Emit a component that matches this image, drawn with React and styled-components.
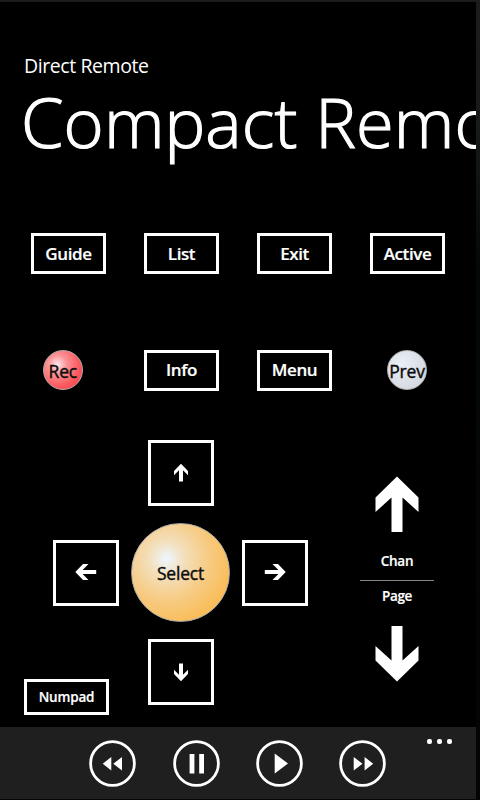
import React from "react";
import styled, { createGlobalStyle } from "styled-components";

const GlobalStyle = createGlobalStyle`
  * { box-sizing: border-box; }
  body { margin: 0; background: #000; }
`;

const Screen = styled.div`
  width: 480px;
  height: 800px;
  padding: 2px 4px 1px 0;
  background: linear-gradient(180deg, #1c1c1c 0, #171a1a 130px, #050808 260px, #030505 760px, #050505 100%);
  font-family: "Open Sans", "Noto Sans", sans-serif;
  color: #fff;
  overflow: hidden;
`;

const Page = styled.main`
  display: flex;
  flex-direction: column;
  height: 797px;
  background: #000;
  overflow: hidden;
`;

const Header = styled.header`
  height: 231px;
  padding: 50px 0 0 24px;
  overflow: hidden;
  white-space: nowrap;
`;

const AppName = styled.div`
  height: 28px;
  font-size: 19.5px;
  line-height: 28px;
  letter-spacing: -0.42px;
`;

const Title = styled.h1`
  margin: 2px 0 0 -3px;
  font-size: 68.5px;
  font-weight: 300;
  line-height: 80px;
  letter-spacing: 0.1px;
  -webkit-text-stroke: 1.2px #fff;
`;

const KeyGrid = styled.section`
  display: grid;
  grid-template-columns: repeat(4, 75px);
  grid-template-rows: 41px 41px;
  column-gap: 38px;
  row-gap: 75.5px;
  margin-left: 31px;
  align-items: center;
  justify-items: center;
`;

const Key = styled.button`
  display: flex;
  align-items: center;
  justify-content: center;
  width: ${(p) => p.$w || 75}px;
  height: ${(p) => p.$h || 41}px;
  padding: 0 0 1px;
  border: 3px solid #fff;
  background: #000;
  color: #fff;
  font: 600 ${(p) => p.$size || 17}px "Open Sans", "Noto Sans", sans-serif;
  letter-spacing: ${(p) => p.$track || -0.4}px;
  -webkit-text-stroke: 0.2px #fff;
`;

const NumpadKey = styled(Key)`
  grid-column: 1;
  grid-row: 3;
  align-self: end;
  justify-self: start;
  margin: 0 0 -10px -29px;
`;

const fills = {
  red: "radial-gradient(circle at 36% 36%, #ffe9ec 0, #fb9296 26%, #fb5a5f 60%, #fa3c42 90%)",
  silver: "radial-gradient(circle at 36% 36%, #eaf0f7 0, #dce2e8 45%, #cfd5da 90%)",
  amber: "radial-gradient(circle at 36% 36%, #edf7ff 0, #f3dfbb 20%, #f7cc86 45%, #f9bf5e 70%, #fab543 90%)",
};

const Orb = styled.button`
  display: flex;
  align-items: center;
  justify-content: center;
  width: ${(p) => p.$d}px;
  height: ${(p) => p.$d}px;
  padding: ${(p) => p.$drop || 0}px 0 0;
  margin-left: ${(p) => p.$shift || 0}px;
  border: 1px solid #b0acac;
  border-radius: 50%;
  background: ${(p) => fills[p.$tone]};
  background-origin: border-box;
  color: #0c0c0c;
  font: 500 17.5px "Open Sans", "Noto Sans", sans-serif;
  letter-spacing: -0.2px;
  -webkit-text-stroke: 0.4px #0c0c0c;
`;

const Controls = styled.section`
  display: flex;
  align-items: flex-start;
  margin-top: 49.5px;
  padding-left: 53px;
`;

const DirectionPad = styled.div`
  display: grid;
  grid-template-columns: 66px 99px 66px;
  grid-template-rows: 66px 99px 66px;
  column-gap: 12px;
  row-gap: 17px;
  align-items: center;
  justify-items: center;
`;

const Place = styled.div`
  display: flex;
  grid-column: ${(p) => p.$col};
  grid-row: ${(p) => p.$row};
`;

const ChannelRocker = styled.div`
  display: flex;
  flex-direction: column;
  align-items: center;
  width: 74px;
  margin: 36px 0 0 52px;
`;

const RockerLabel = styled.div`
  height: ${(p) => p.$h}px;
  padding-top: ${(p) => p.$top}px;
  line-height: 20px;
  font-size: 13.5px;
  font-weight: 600;
  letter-spacing: -0.3px;
  -webkit-text-stroke: 0.2px #fff;
`;

const Divider = styled.div`
  width: 74px;
  height: 1px;
  background: #858585;
`;

const AppBar = styled.footer`
  position: relative;
  display: flex;
  align-items: center;
  gap: 36.4px;
  height: 72px;
  margin-top: auto;
  padding-left: 89.3px;
  background: #1f1f1f;
`;

const MediaButton = styled.button`
  display: flex;
  width: 47px;
  height: 47px;
  padding: 0;
  border: 0;
  background: none;
`;

const MoreButton = styled.button`
  position: absolute;
  top: 12px;
  right: 24px;
  display: flex;
  gap: 5px;
  padding: 0;
  border: 0;
  background: none;
`;

const Dot = styled.span`
  width: 5px;
  height: 5px;
  border-radius: 2px;
  background: #fff;
`;

const turns = { up: 0, right: 90, down: 180, left: 270 };

function SmallArrow({ dir }) {
  const vertical = dir === "up" || dir === "down";
  return (
    <svg width="22" height="22" viewBox="-11 -11 22 22" fill="#fff" aria-hidden="true">
      <g transform={`rotate(${turns[dir]})`}>
        {vertical ? (
          <path d="M0-9.3 7-2V2.2L2-2.8V8.5H-2V-2.8L-7 2.2V-2Z" />
        ) : (
          <path d="M0-10.7 8-3V2.5L2.1-3.4V10.2H-2.1V-3.4L-8 2.5V-3Z" />
        )}
      </g>
    </svg>
  );
}

function LargeArrow({ down }) {
  return (
    <svg width="44" height="56" viewBox="0 0 44 56" fill="#fff" aria-hidden="true">
      <path
        transform={down ? "matrix(1 0 0 -1 0 56)" : undefined}
        d="M22 .5 43.5 21.5V36L27.5 21.5V56H16.5V21.5L.5 36V21.5Z"
      />
    </svg>
  );
}

const mediaShapes = {
  Rewind: "M22.3 17V30.5L13.7 23.7ZM33 17V30.5L24.3 23.7Z",
  Pause: "M16.6 14H21.4V33.5H16.6ZM26.2 14H31V33.5H26.2Z",
  Play: "M18.7 13.5V33.5L32 23.5Z",
  "Fast forward": "M14.7 17V30.5L23.5 23.7ZM25.6 17V30.5L34.2 23.7Z",
};

function MediaIcon({ name }) {
  return (
    <svg width="47" height="47" viewBox="0 0 47 47" aria-hidden="true">
      <circle cx="23.5" cy="23.5" r="21.9" fill="none" stroke="#fff" strokeWidth="2.8" />
      <path d={mediaShapes[name]} fill="#fff" />
    </svg>
  );
}

export default function App() {
  return (
    <>
      <GlobalStyle />
      <Screen>
        <Page>
          <Header>
            <AppName>Direct Remote</AppName>
            <Title>Compact Remote</Title>
          </Header>
          <KeyGrid>
            <Key>Guide</Key>
            <Key>List</Key>
            <Key>Exit</Key>
            <Key>Active</Key>
            <Orb $d={40} $tone="red" $shift={-11.5} $drop={1}>Rec</Orb>
            <Key>Info</Key>
            <Key>Menu</Key>
            <Orb $d={40} $tone="silver" $shift={-1} $drop={1}>Prev</Orb>
          </KeyGrid>
          <Controls>
            <DirectionPad>
              <Place $col={2} $row={1}>
                <Key $w={66} $h={66} aria-label="Up"><SmallArrow dir="up" /></Key>
              </Place>
              <Place $col={1} $row={2}>
                <Key $w={66} $h={66} aria-label="Left"><SmallArrow dir="left" /></Key>
              </Place>
              <Place $col={2} $row={2}>
                <Orb $d={99} $tone="amber" $drop={1}>Select</Orb>
              </Place>
              <Place $col={3} $row={2}>
                <Key $w={66} $h={66} aria-label="Right"><SmallArrow dir="right" /></Key>
              </Place>
              <Place $col={2} $row={3}>
                <Key $w={66} $h={66} aria-label="Down"><SmallArrow dir="down" /></Key>
              </Place>
              <NumpadKey $w={85} $h={36} $size={13.5} $track={-0.2}>Numpad</NumpadKey>
            </DirectionPad>
            <ChannelRocker>
              <LargeArrow />
              <RockerLabel $h={48} $top={19}>Chan</RockerLabel>
              <Divider />
              <RockerLabel $h={45} $top={5}>Page</RockerLabel>
              <LargeArrow down />
            </ChannelRocker>
          </Controls>
          <AppBar>
            {Object.keys(mediaShapes).map((name) => (
              <MediaButton key={name} aria-label={name}>
                <MediaIcon name={name} />
              </MediaButton>
            ))}
            <MoreButton aria-label="More">
              <Dot />
              <Dot />
              <Dot />
            </MoreButton>
          </AppBar>
        </Page>
      </Screen>
    </>
  );
}
